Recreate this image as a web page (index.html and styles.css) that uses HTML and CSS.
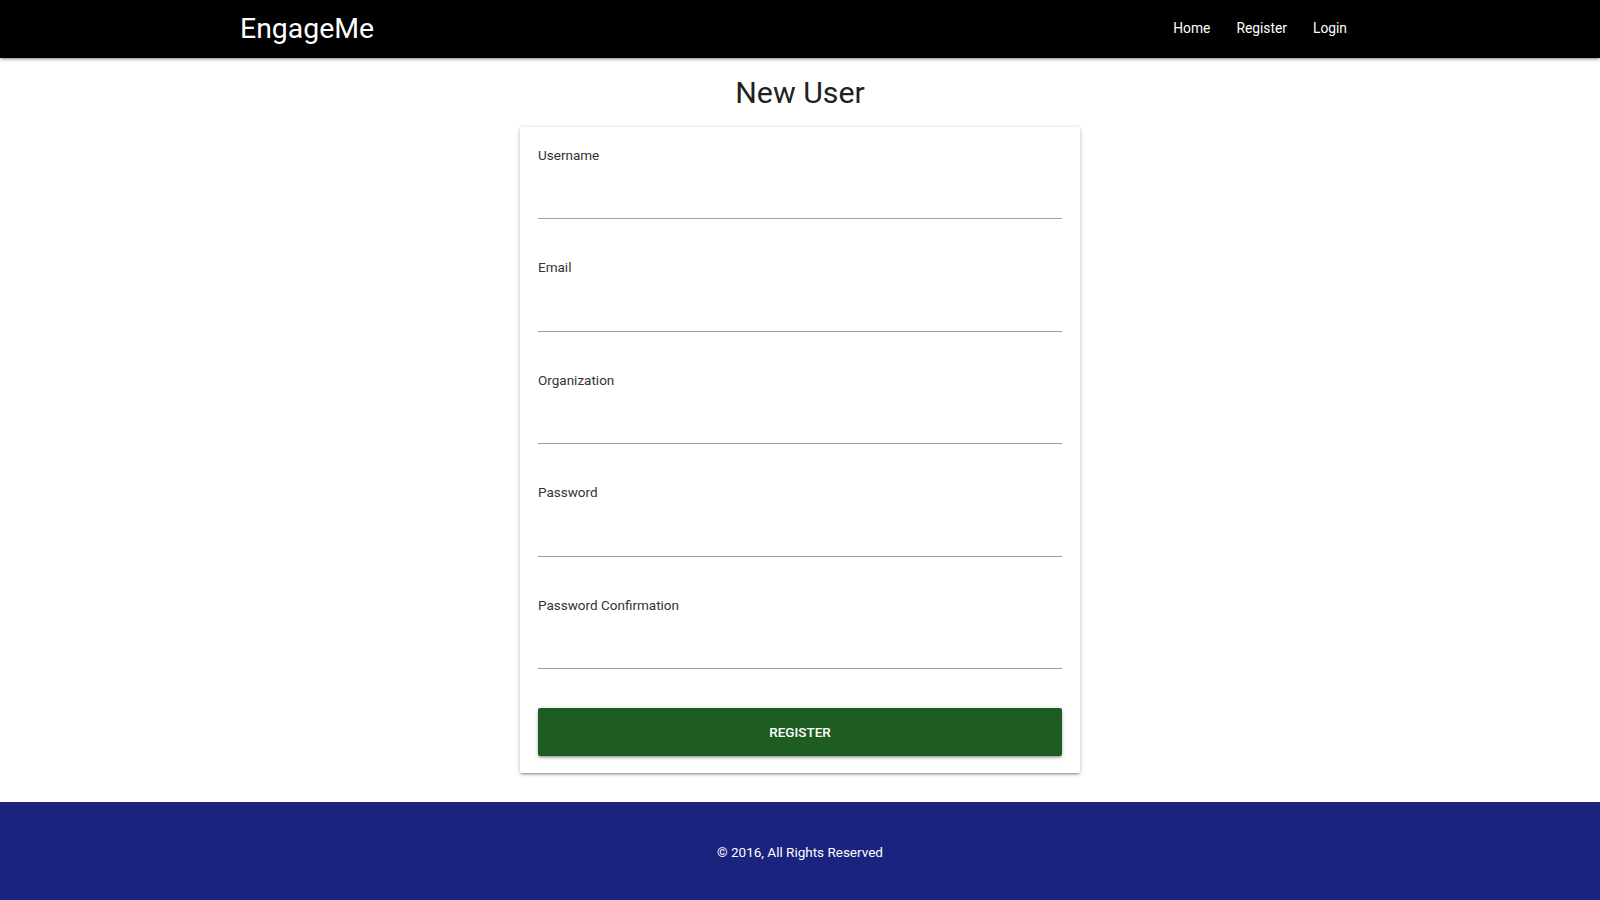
FILE: index.html
```html
<!DOCTYPE html>
<html lang="en">
<head>
<meta charset="utf-8">
<title>EngageMe - New User</title>
<link rel="stylesheet" href="styles.css">
</head>
<body>
<header class="navbar">
  <div class="nav-inner">
    <a class="brand" href="#">EngageMe</a>
    <ul class="nav-links">
      <li><a href="#">Home</a></li>
      <li><a href="#">Register</a></li>
      <li><a href="#">Login</a></li>
    </ul>
  </div>
</header>
<main class="main">
  <h1 class="page-title">New User</h1>
  <form class="card">
    <div class="field">
      <label class="field-label">Username</label>
      <input class="field-input" type="text">
    </div>
    <div class="field">
      <label class="field-label">Email</label>
      <input class="field-input" type="email">
    </div>
    <div class="field">
      <label class="field-label">Organization</label>
      <input class="field-input" type="text">
    </div>
    <div class="field">
      <label class="field-label">Password</label>
      <input class="field-input" type="password">
    </div>
    <div class="field">
      <label class="field-label">Password Confirmation</label>
      <input class="field-input" type="password">
    </div>
    <button class="btn-register" type="button">Register</button>
  </form>
</main>
<footer class="footer">
  <p class="footer-text">© 2016, All Rights Reserved</p>
</footer>
</body>
</html>
```
FILE: styles.css
```css
* { box-sizing: border-box; }
html, body { margin: 0; padding: 0; }
body {
  font-family: Roboto, "Liberation Sans", sans-serif;
  background: #ffffff;
  color: #212121;
  min-height: 900px;
  display: flex;
  flex-direction: column;
}
.navbar {
  background: #000000;
  height: 58px;
  box-shadow: 0 2px 2px 0 rgba(0,0,0,.14), 0 3px 1px -2px rgba(0,0,0,.12), 0 1px 5px 0 rgba(0,0,0,.2);
  position: relative;
  z-index: 2;
}
.nav-inner {
  width: 1120px;
  margin: 0 auto;
  height: 58px;
  display: flex;
  align-items: center;
  justify-content: space-between;
}
.brand {
  color: #ffffff;
  text-decoration: none;
  font-size: 28.4px;
  line-height: 36px;
  margin-top: -1px;
}
.nav-links {
  list-style: none;
  margin: 0;
  padding: 0;
  display: flex;
}
.nav-links a {
  display: block;
  color: #ffffff;
  text-decoration: none;
  font-size: 13.8px;
  line-height: 20px;
  padding: 0 13px;
  margin-top: -3px;
}
.main {
  flex: 1;
  display: flex;
  flex-direction: column;
  align-items: center;
  padding-top: 17px;
  padding-bottom: 29px;
}
.page-title {
  margin: 0;
  font-size: 30.3px;
  line-height: 36px;
  font-weight: 400;
  color: #212121;
}
.card {
  margin-top: 16px;
  width: 560px;
  background: #ffffff;
  padding: 17.5px 18px 17px;
  border-radius: 2px;
  box-shadow: 0 2px 2px 0 rgba(0,0,0,.14), 0 3px 1px -2px rgba(0,0,0,.12), 0 1px 5px 0 rgba(0,0,0,.2);
  display: flex;
  flex-direction: column;
}
.field {
  display: flex;
  flex-direction: column;
  height: 112.5px;
}
.field-label {
  font-size: 13.5px;
  line-height: 20px;
  color: #333333;
}
.field-input {
  height: 54.5px;
  border: none;
  border-bottom: 1px solid #9e9e9e;
  outline: none;
  background: transparent;
  font-family: inherit;
  font-size: 15px;
  padding: 0;
}
.btn-register {
  margin-top: 1px;
  height: 48px;
  border: none;
  border-radius: 2px;
  background: #1e5d21;
  color: #ffffff;
  font-family: inherit;
  font-size: 13.5px;
  font-weight: 500;
  text-transform: uppercase;
  box-shadow: 0 2px 2px 0 rgba(0,0,0,.14), 0 3px 1px -2px rgba(0,0,0,.12), 0 1px 5px 0 rgba(0,0,0,.2);
}
.footer {
  background: #1a237e;
  height: 98px;
  padding-top: 40px;
}
.footer-text {
  margin: 0;
  text-align: center;
  color: #ffffff;
  font-size: 13.5px;
  line-height: 20px;
}
```
